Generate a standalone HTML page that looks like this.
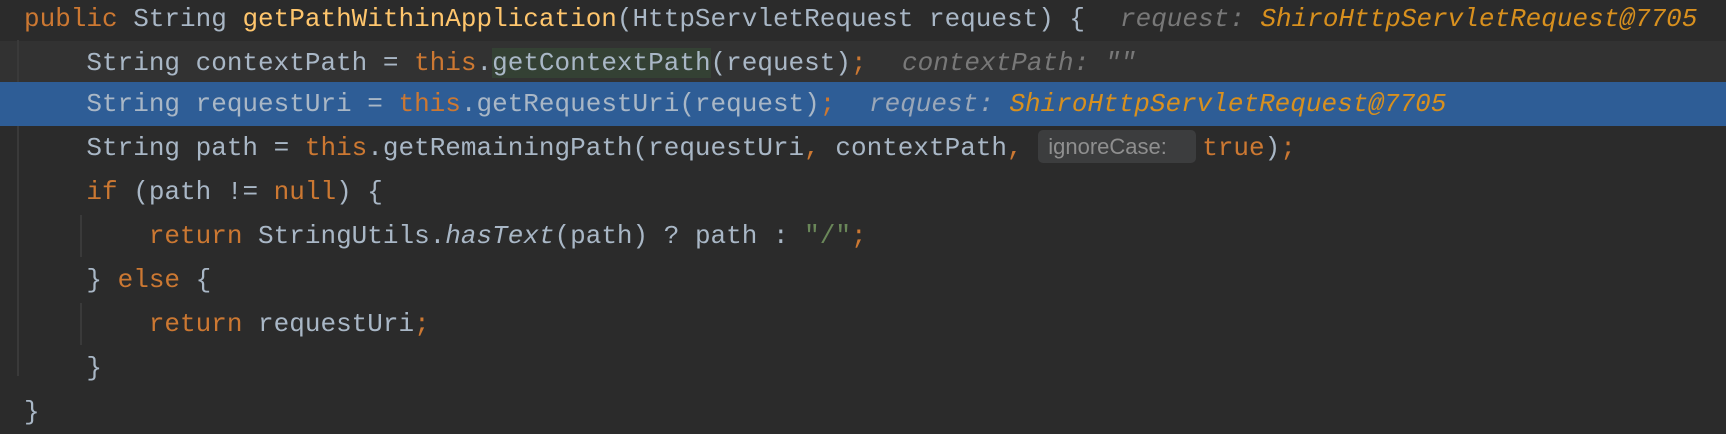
<!DOCTYPE html>
<html><head><meta charset="utf-8"><style>
html,body{margin:0;padding:0;background:#2b2b2b;width:1726px;height:430px;overflow:hidden}
.l{position:absolute;left:0;width:1726px;height:44px;line-height:44px;font-family:"Liberation Mono","DejaVu Sans Mono",monospace;font-size:26px;color:#a9b7c6;white-space:pre}
.t{position:absolute;left:24px;top:0}
.k{color:#cc7832}.f{color:#ffc66d}.s{color:#6a8759}.i{font-style:italic}
.h{position:absolute;top:0;font-style:italic;color:#787878}
.v{color:#d8901e}
.g{position:absolute;background:#3a3a3a;width:2px}
.box{display:inline-block;box-sizing:border-box;width:158px;background:#3c3d3e;color:#8f8f8f;font-family:"Liberation Sans",sans-serif;font-size:22px;font-style:normal;border-radius:5px;line-height:33px;padding:0 0 0 10px;vertical-align:1px;margin-right:6px}
</style></head><body>
<div class="l" style="top:-3px"><span class="t"><span class="k">public</span> String <span class="f">getPathWithinApplication</span>(HttpServletRequest request) {</span><span class="h" style="left:1120px">request: <span class="v">ShiroHttpServletRequest@7705</span></span></div>
<div class="l" style="top:41px;background:#323232"><span class="t">    String contextPath = <span class="k">this</span>.<span style="background:#344134">getContextPath</span>(request)<span class="k">;</span></span><span class="h" style="left:902px">contextPath: ""</span></div>
<div class="l" style="top:82px;background:#2e5d96"><span class="t">    String requestUri = <span class="k">this</span>.getRequestUri(request)<span class="k">;</span></span><span class="h" style="left:869px;color:#9aa7b8">request: <span class="v">ShiroHttpServletRequest@7705</span></span></div>
<div class="l" style="top:126px"><span class="t">    String path = <span class="k">this</span>.getRemainingPath(requestUri<span class="k">,</span> contextPath<span class="k">,</span> <span class="box">ignoreCase:</span><span class="k">true</span>)<span class="k">;</span></span></div>
<div class="l" style="top:170px"><span class="t">    <span class="k">if</span> (path != <span class="k">null</span>) {</span></div>
<div class="l" style="top:214px"><span class="t">        <span class="k">return</span> StringUtils.<span class="i">hasText</span>(path) ? path : <span class="s">"/"</span><span class="k">;</span></span></div>
<div class="l" style="top:258px"><span class="t">    } <span class="k">else</span> {</span></div>
<div class="l" style="top:302px"><span class="t">        <span class="k">return</span> requestUri<span class="k">;</span></span></div>
<div class="l" style="top:346px"><span class="t">    }</span></div>
<div class="l" style="top:390px"><span class="t">}</span></div>
<div class="g" style="left:17px;top:40px;height:42px"></div>
<div class="g" style="left:17px;top:126px;height:250px"></div>
<div class="g" style="left:80px;top:215px;height:42px"></div>
<div class="g" style="left:80px;top:303px;height:42px"></div>
</body></html>
